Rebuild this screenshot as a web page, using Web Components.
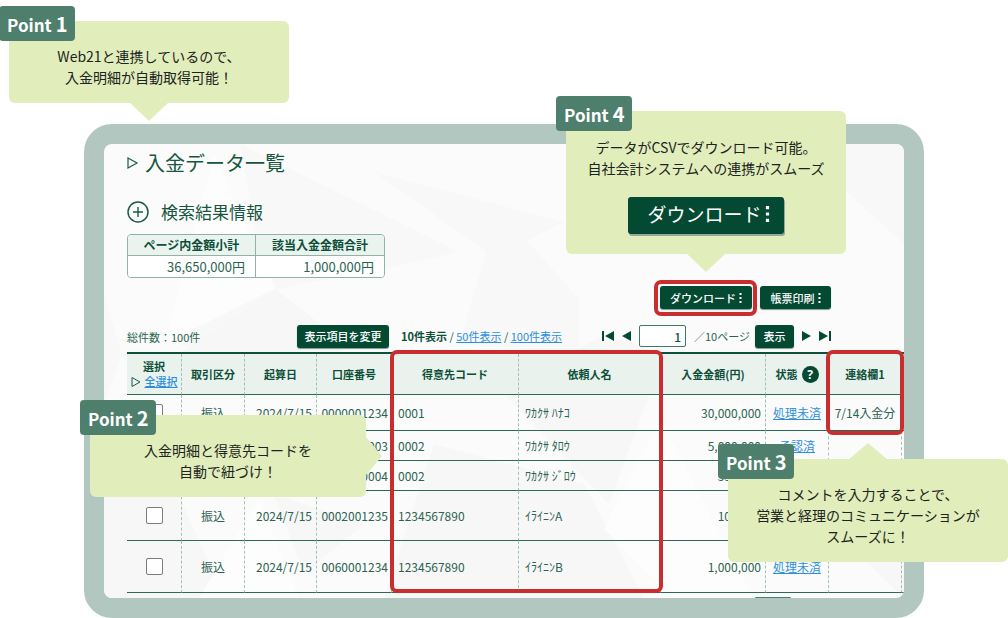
<!DOCTYPE html>
<html lang="ja">
<head>
<meta charset="utf-8">
<title>入金データ一覧</title>
<style>
  body { margin: 0; background: #fff; color: #2a6350; font: 12px/16px "Noto Sans CJK JP", "Noto Sans", sans-serif; }
</style>
</head>
<body>
<feature-stage></feature-stage>

<script>
const define = (name, html, setup) => {
  const template = document.createElement('template');
  template.innerHTML = html;
  customElements.define(name, class extends HTMLElement {
    constructor() {
      super();
      this.attachShadow({ mode: 'open' }).append(template.content.cloneNode(true));
    }
    connectedCallback() {
      if (setup && !this.ready) { this.ready = true; setup(this, this.shadowRoot); }
    }
  });
};

/* Speech balloon with a numbered badge; arrow="down|up|right" */
define('point-callout', `
  <style>
    :host { display: block; position: absolute; z-index: 3; box-sizing: border-box; width: 280px; padding: 25px 0 15px;
      border-radius: 6px; background: #e2edbc; color: #1b2420; font-size: 14px; line-height: 21px; text-align: center; }
    .badge { position: absolute; left: -10px; top: -15px; height: 35px; padding: 0 8px; border-radius: 4px; background: #4d7f6c;
      color: #fff; font-size: 17px; font-weight: 700; line-height: 35px; white-space: nowrap; }
    b { font-size: 20px; font-weight: 700; }
    .arrow { position: absolute; left: calc(50% - 19px); top: 100%; width: 38px; height: 18px; background: #e2edbc;
      clip-path: polygon(0 0, 100% 0, 50% 100%); }
    :host([arrow="up"]) .arrow { top: -16px; height: 16px; clip-path: polygon(50% 0, 100% 100%, 0 100%); }
    :host([arrow="right"]) .arrow { left: 100%; top: calc(50% - 19px); width: 16px; height: 38px; clip-path: polygon(0 0, 100% 50%, 0 100%); }
  </style>
  <span class="badge">Point <b></b></span>
  <slot></slot>
  <span class="arrow"></span>`,
  (el, root) => { root.querySelector('b').textContent = el.getAttribute('number'); });

/* Rounded green action button; "menu" adds the vertical dots, "large" enlarges it */
define('action-button', `
  <style>
    :host { display: inline-block; }
    button { display: flex; align-items: center; justify-content: center; gap: 3px; box-sizing: border-box; width: 100%; height: 23px; padding: 0;
      border: 0; border-radius: 3px; background: #044a33; box-shadow: 0 1px 1px #7f9a90; color: #fff;
      font: 500 11px/16px "Noto Sans CJK JP", sans-serif; white-space: nowrap; }
    svg { display: none; width: 3px; height: 10px; fill: #fff; }
    :host([menu]) svg { display: block; }
    :host([large]) button { height: 37px; padding: 0 0 4px 5px; font-size: 19px; font-weight: 400; line-height: 28px; box-shadow: 1px 2px 0 #93a898; }
    :host([large]) svg { width: 5px; height: 16px; }
  </style>
  <button type="button"><slot></slot><svg viewBox="0 0 3 10"><path d="M.5 0h2v2h-2zM.5 4h2v2h-2zM.5 8h2v2h-2z"/></svg></button>`);

/* Red frame drawn over what it points at */
define('focus-ring', `
  <style>:host { display: block; position: absolute; z-index: 2; box-sizing: border-box; border: 4px solid #c92e2f; border-radius: 7px; pointer-events: none; }</style>`);

define('device-frame', `
  <style>
    :host { display: block; border: 20px solid #b2c7c0; border-radius: 28px; background: #b2c7c0; }
    .screen { position: relative; overflow: hidden; border-radius: 8px; background: #fbfbfb; }
    .facets { position: absolute; inset: 0; width: 100%; height: 100%; }
    .content { position: relative; }
  </style>
  <div class="screen">
    <svg class="facets" viewBox="0 0 800 454" preserveAspectRatio="none">
      <path fill="#f8f8f8" d="M136 0L355 108 280 125 172 145 150 80zM172 145L55 190l35 17h150zM0 150L18 210 0 260zM270 28l190 50-70 35zM395 65l80 90v55l-120-10zM690 0l110 100V0z"/>
      <path fill="#f7f7f7" d="M172 145l50 40 15 25H75zM0 340h70l50 114H0zM170 350l90 30-60 50zM400 250l100-60 60 20-55 150zM330 300l150 40 60 114H280zM640 300l160 40v114z"/>
      <path fill="#fdfdfd" d="M110 10L60 200l110-55zM556 275l-56 110 70 69h80zM155 355l-60 99h100z"/>
    </svg>
    <div class="content"><slot></slot></div>
  </div>`);

define('page-heading', `
  <style>
    :host { display: block; }
    h1, h2 { display: flex; align-items: center; margin: 0; font-weight: 400; color: #165640; }
    h1 { gap: 6px; font-size: 20px; line-height: 28px; }
    h2 { gap: 12px; margin-top: 23px; font-size: 17px; line-height: 24px; }
    svg { fill: none; stroke: #1c5c47; flex: none; }
  </style>
  <h1><svg width="12" height="14" viewBox="0 0 12 14"><path d="M1 2l9 5-9 5z" stroke-width="1.2"/></svg><span>入金データ一覧</span></h1>
  <h2><svg width="22" height="22" viewBox="0 0 22 22"><circle cx="11" cy="11" r="10" stroke-width="1.5"/><path d="M11 6v10M6 11h10" stroke-width="1.4"/></svg><span>検索結果情報</span></h2>`);

define('total-summary', `
  <style>
    :host { display: block; margin-top: 10px; }
    table { width: 258px; table-layout: fixed; border: 1px solid #8fb3a5; border-radius: 4px; border-spacing: 0; overflow: hidden; }
    th, td { box-sizing: border-box; height: 21px; padding: 0; line-height: 18px; }
    th { border-bottom: 1px solid #8fb3a5; background: #eaf3ee; color: #0d4f39; font-weight: 700; font-size: 12px; }
    td { padding-right: 10px; background: #fff; font-size: 13px; text-align: right; }
    tr > :first-child { border-right: 1px solid #8fb3a5; }
  </style>
  <table>
    <tr><th scope="col">ページ内金額小計</th><th scope="col">該当入金金額合計</th></tr>
    <tr><td>36,650,000円</td><td>1,000,000円</td></tr>
  </table>`);

define('export-actions', `
  <style>
    :host { display: flex; justify-content: flex-end; gap: 8px; margin: 8px 73px 0 0; }
    .target { position: relative; width: 92px; }
    .print { width: 71px; }
    action-button { display: block; }
    focus-ring { inset: -6px -5px -7px -6px; }
  </style>
  <div class="target"><action-button menu>ダウンロード</action-button><focus-ring></focus-ring></div>
  <action-button class="print" menu>帳票印刷</action-button>`);

define('list-toolbar', `
  <style>
    :host { display: flex; align-items: center; height: 24px; margin: 15px 73px 0 0; font-size: 11px; white-space: nowrap; }
    .count { width: 170px; padding-top: 2px; }
    .columns { width: 92px; margin-right: 12px; }
    strong { color: #0d4f39; }
    a { color: #2b8fdd; }
    nav { display: flex; align-items: center; gap: 8px; margin-left: auto; }
    .icon { display: block; padding: 0; border: 0; background: none; }
    svg { display: block; height: 12px; fill: #044a33; }
    input { box-sizing: border-box; width: 47px; height: 22px; padding: 0 4px; border: 1px solid #3f7a66; border-radius: 2px; background: #fff;
      color: #0d4f39; font: 500 12px/16px "Noto Sans CJK JP", sans-serif; text-align: right; }
    .go { width: 39px; margin-left: -3px; }
  </style>
  <span class="count">総件数：100件</span>
  <action-button class="columns">表示項目を変更</action-button>
  <span><strong>10件表示</strong> / <a href="#50">50件表示</a> / <a href="#100">100件表示</a></span>
  <nav aria-label="ページ送り">
    <button class="icon" type="button" aria-label="最初のページ"><svg width="12" viewBox="0 0 12 12"><path d="M0 1h2v10H0zM12 1v10L3 6z"/></svg></button>
    <button class="icon" type="button" aria-label="前のページ"><svg width="9" viewBox="0 0 9 12"><path d="M9 1v10L0 6z"/></svg></button>
    <input type="text" value="1" aria-label="ページ番号">
    <span>／10ページ</span>
    <action-button class="go">表示</action-button>
    <button class="icon" type="button" aria-label="次のページ"><svg width="9" viewBox="0 0 9 12"><path d="M0 1v10l9-5z"/></svg></button>
    <button class="icon" type="button" aria-label="最後のページ"><svg width="12" viewBox="0 0 12 12"><path d="M10 1h2v10h-2zM0 1v10l9-5z"/></svg></button>
  </nav>`);

const deposits = [
  ['振込', '2024/7/15', '0000001234', '0001', 'ﾜｶｸｻ ﾊﾅｺ', '30,000,000', '処理未済', '7/14入金分', 36],
  ['', '', '0000001003', '0002', 'ﾜｶｸｻ ﾀﾛｳ', '5,000,000', '承認済', '', 30],
  ['', '', '0000000004', '0002', 'ﾜｶｸｻ ｼﾞﾛｳ', '550,000', '', '', 30],
  ['振込', '2024/7/15', '0002001235', '1234567890', 'ｲﾗｲﾆﾝA', '100,000', '', '', 50],
  ['振込', '2024/7/15', '0060001234', '1234567890', 'ｲﾗｲﾆﾝB', '1,000,000', '処理未済', '', 52],
];

define('deposit-table', `
  <style>
    :host { display: block; position: relative; margin-top: 4px; }
    table { width: 100%; table-layout: fixed; border-spacing: 0; border-top: 2px solid #0d4f39; white-space: nowrap; }
    th, td { box-sizing: border-box; padding: 0; border-right: 1px dashed #a3c2b6; border-bottom: 1px solid #2b6b55; }
    tr > :last-child { border-right: 0; }
    th { height: 41px; background: #e9f2ed; color: #0d4f39; font-size: 11px; line-height: 15px; font-weight: 700; }
    td { text-align: center; }
    .right { padding-right: 4px; text-align: right; }
    .account { padding-right: 3px; text-align: right; }
    .left { padding-left: 6px; text-align: left; }
    a { color: #2b8fdd; }
    .all, .state { display: flex; align-items: center; justify-content: center; gap: 4px; }
    .all svg { fill: none; stroke: #1c5c47; }
    .all a { font-weight: 500; }
    .help { width: 17px; height: 17px; padding: 0; border: 0; border-radius: 50%; background: #044a33; color: #fff; font: 700 12px/17px "Noto Sans", sans-serif; }
    input { display: block; appearance: none; box-sizing: border-box; width: 17px; height: 17px; margin: 0 auto; border: 1px solid #7c7c80; border-radius: 2px; background: #fff; }
    .customer { left: 263px; right: 241px; top: -2px; bottom: 0; }
    .memo { right: 0; width: 78px; top: -2px; height: 85px; }
  </style>
  <table>
    <colgroup><col style="width:55px"><col style="width:63px"><col style="width:72px"><col style="width:75px"><col style="width:127px"><col><col style="width:105px"><col style="width:63px"><col style="width:73px"><col style="width:2px"></colgroup>
    <thead><tr>
      <th scope="col">選択<div class="all"><svg width="10" height="12" viewBox="0 0 10 12"><path d="M1 1.500l8 4.500-8 4.500z"/></svg><a href="#all">全選択</a></div></th>
      <th scope="col">取引区分</th><th scope="col">起算日</th><th scope="col">口座番号</th><th scope="col">得意先コード</th><th scope="col">依頼人名</th><th scope="col">入金金額(円)</th>
      <th scope="col"><div class="state">状態<button class="help" type="button">?</button></div></th>
      <th scope="col">連絡欄1</th><th></th>
    </tr></thead>
    <tbody></tbody>
  </table>
  <focus-ring class="customer"></focus-ring>
  <focus-ring class="memo"></focus-ring>`,
  (el, root) => {
    root.querySelector('tbody').innerHTML = deposits.map(([type, date, account, code, name, amount, state, memo, height]) => `
      <tr style="height:${height}px"><td><input type="checkbox" aria-label="${name}を選択"></td><td>${type}</td><td class="right">${date}</td><td class="account">${account}</td>
      <td class="left">${code}</td><td class="left">${name}</td><td class="right">${amount}</td><td>${state ? `<a href="#state">${state}</a>` : ''}</td><td>${memo}</td><td></td></tr>`).join('');
  });

define('feature-stage', `
  <style>
    :host { display: block; position: relative; padding: 124px 84px 0; }
    main { padding: 5px 0 0 23px; }
    .next { width: 36px; height: 1px; margin: 4px 113px 0 auto; border-radius: 2px 2px 0 0; background: #4a7f6c; }
    .p1 { left: 9px; top: 21px; }
    .p2 { left: 90px; top: 415px; width: 276px; }
    .p3 { right: 0; top: 459px; }
    .p4 { right: 162px; top: 111px; padding: 26px 0 20px; }
    .p4 action-button { display: block; width: 156px; margin: 18px auto 0; }
  </style>
  <device-frame>
    <main>
      <page-heading></page-heading>
      <total-summary></total-summary>
      <export-actions></export-actions>
      <list-toolbar></list-toolbar>
      <deposit-table></deposit-table>
      <div class="next"></div>
    </main>
  </device-frame>
  <point-callout class="p1" number="1" arrow="down">Web21と連携しているので、<br>入金明細が自動取得可能！</point-callout>
  <point-callout class="p2" number="2" arrow="right">入金明細と得意先コードを<br>自動で紐づけ！</point-callout>
  <point-callout class="p3" number="3" arrow="up">コメントを入力することで、<br>営業と経理のコミュニケーションが<br>スムーズに！</point-callout>
  <point-callout class="p4" number="4" arrow="down">データがCSVでダウンロード可能。<br>自社会計システムへの連携がスムーズ<action-button large menu>ダウンロード</action-button></point-callout>`);
</script>
</body>
</html>
